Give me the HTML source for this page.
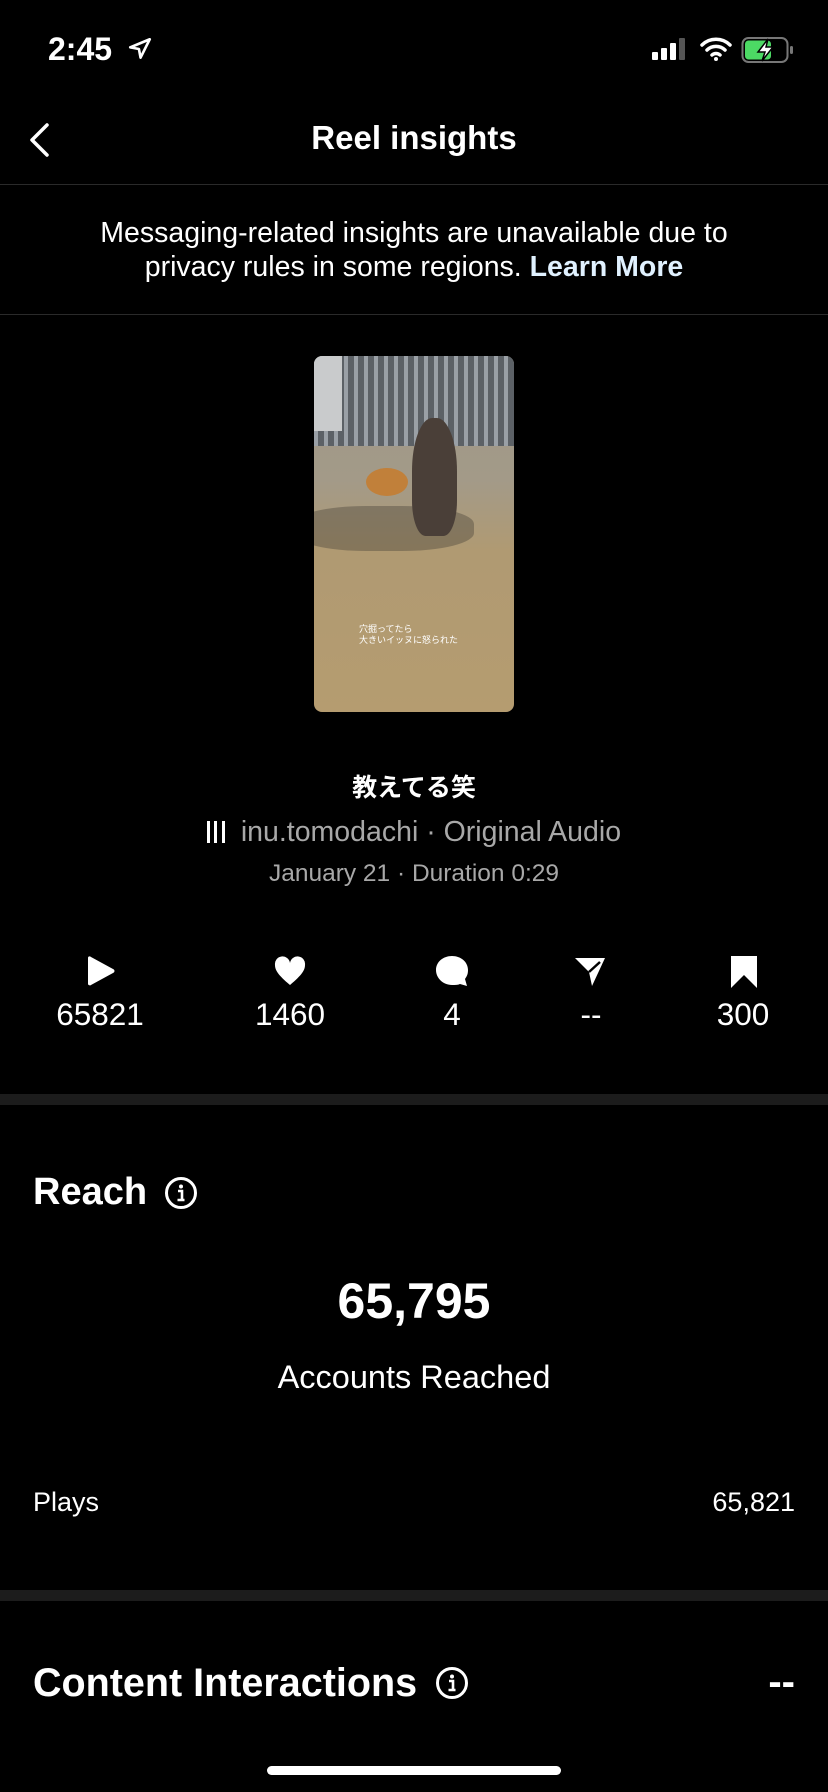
<!DOCTYPE html>
<html><head><meta charset="utf-8"><style>
*{margin:0;padding:0;box-sizing:border-box}
body{width:828px;height:1792px;background:#000;color:#fff;font-family:"Liberation Sans","Noto Sans CJK JP",sans-serif;position:relative;overflow:hidden}
.a{position:absolute;white-space:nowrap}
.c{left:0;width:828px;text-align:center}
.hr{position:absolute;left:0;width:828px;height:1px;background:#2a2a2a}
.sep{position:absolute;left:0;width:828px;height:11px;background:#1c1c1c}
.st{position:absolute;width:120px;text-align:center;font-size:31.5px}
</style></head><body>
<div class="a" style="left:48px;top:31px;font-size:32px;font-weight:600">2:45</div>
<svg class="a" style="left:127px;top:36px" width="26" height="26" viewBox="0 0 24 24"><path d="M21 3L3 10.5l8 1.5 1.5 8z" fill="none" stroke="#fff" stroke-width="2.4" stroke-linejoin="round"/></svg>
<svg class="a" style="left:652px;top:38px" width="40" height="22" viewBox="0 0 40 22"><rect x="0" y="14" width="6" height="8" rx="1" fill="#fff"/><rect x="9" y="10" width="6" height="12" rx="1" fill="#fff"/><rect x="18" y="5" width="6" height="17" rx="1" fill="#fff"/><rect x="27" y="0" width="6" height="22" rx="1" fill="#555"/></svg>
<svg class="a" style="left:700px;top:37px" width="32" height="24" viewBox="0 0 32 24"><path d="M2 8a20 20 0 0 1 28 0M7 13a13 13 0 0 1 18 0M12 18a6 6 0 0 1 8 0" fill="none" stroke="#fff" stroke-width="3.5" stroke-linecap="round"/><circle cx="16" cy="22" r="2" fill="#fff"/></svg>
<svg class="a" style="left:741px;top:36px" width="54" height="28" viewBox="0 0 54 28"><rect x="1.5" y="2" width="45" height="24" rx="6" fill="none" stroke="#777" stroke-width="2"/><rect x="4" y="4.5" width="26" height="19" rx="3.5" fill="#4cd964"/><rect x="49" y="10" width="3" height="8" rx="1.5" fill="#777"/><path d="M27 3l-10 13h7l-3 9 11-14h-7z" fill="#fff" stroke="#000" stroke-width="1.5"/></svg>
<svg class="a" style="left:26px;top:122px" width="26" height="36" viewBox="0 0 26 36"><path d="M21 3L6 18l15 15" fill="none" stroke="#fff" stroke-width="3.5" stroke-linecap="round" stroke-linejoin="round"/></svg>
<div class="a c" style="top:119px;font-size:33px;font-weight:700">Reel insights</div>
<div class="hr" style="top:184px"></div>
<div class="a c" style="top:216px;font-size:28.5px;line-height:34px">Messaging-related insights are unavailable due to<br>privacy rules in some regions. <span style="color:#e0f1ff;font-weight:700">Learn More</span></div>
<div class="hr" style="top:314px"></div>
<div class="a" style="left:314px;top:356px;width:200px;height:356px;border-radius:8px;overflow:hidden;background:linear-gradient(180deg,#9e9788 0%,#a39a88 35%,#b09a72 55%,#b59c70 100%)">
<div class="a" style="left:0;top:0;width:200px;height:90px;background:repeating-linear-gradient(90deg,#9aa0a6 0 4px,#5c6166 4px 10px)"></div>
<div class="a" style="left:0;top:0;width:28px;height:75px;background:#c9cbcc"></div>
<div class="a" style="left:-20px;top:150px;width:180px;height:45px;background:rgba(70,65,55,.4);border-radius:40%"></div>
<div class="a" style="left:52px;top:112px;width:42px;height:28px;background:#c1803a;border-radius:50%"></div>
<div class="a" style="left:98px;top:62px;width:45px;height:118px;background:#4a3f38;border-radius:45% 45% 30% 30%"></div>
<div class="a" style="left:45px;top:268px;font-size:9px;line-height:11px;color:#fff">穴掘ってたら<br>大きいイッヌに怒られた</div>
</div>
<div class="a c" style="top:768px;font-size:25px;font-weight:700">教えてる笑</div>
<div class="a c" style="top:816px;font-size:28.5px;color:#a8a8a8"><span style="display:inline-block;width:26px;height:22px;vertical-align:-2px;background:linear-gradient(90deg,#fff 0 3px,transparent 3px 7px,#fff 7px 10px,transparent 10px 15px,#fff 15px 18px,transparent 18px)"></span> inu.tomodachi · Original Audio</div>
<div class="a c" style="top:860px;font-size:24.5px;color:#a8a8a8">January 21 · Duration 0:29</div>
<svg class="a" style="left:85px;top:955px" width="32" height="32" viewBox="0 0 32 32"><path d="M3 3c0-2 2-2 3-1l22 12c2 1 2 3 0 4L6 30c-1 1-3 0-3-1z" fill="#fff"/></svg>
<svg class="a" style="left:274px;top:956px" width="32" height="30" viewBox="0 0 32 30"><path d="M16 29C4 19 1 14 1 9a7.5 7.5 0 0 1 15-2 7.5 7.5 0 0 1 15 2c0 5-3 10-15 20z" fill="#fff"/></svg>
<svg class="a" style="left:435px;top:955px" width="34" height="32" viewBox="0 0 34 32"><path d="M17 1C8 1 1 7 1 15c0 8 7 15 16 15 3 0 6 0 8-1l7 2-2-7c2-3 3-5 3-9C33 7 26 1 17 1z" fill="#fff"/></svg>
<svg class="a" style="left:574px;top:956px" width="32" height="32" viewBox="0 0 32 32"><path d="M1 2h30L18 30l-3-14L1 2z" fill="#fff"/><path d="M15 16L26 6" stroke="#000" stroke-width="2.5"/></svg>
<svg class="a" style="left:730px;top:955px" width="28" height="34" viewBox="0 0 28 34"><path d="M1 1h26v32L14 20 1 33z" fill="#fff"/></svg>
<div class="st" style="left:40px;top:996px">65821</div>
<div class="st" style="left:230px;top:996px">1460</div>
<div class="st" style="left:392px;top:996px">4</div>
<div class="st" style="left:531px;top:996px">--</div>
<div class="st" style="left:683px;top:996px">300</div>
<div class="sep" style="top:1094px"></div>
<div class="a" style="left:33px;top:1171px;font-size:38px;font-weight:700">Reach</div>
<svg class="a" style="left:164px;top:1176px" width="34" height="34" viewBox="0 0 34 34"><circle cx="17" cy="17" r="14.5" fill="none" stroke="#fff" stroke-width="3"/><circle cx="17" cy="10.5" r="2" fill="#fff"/><path d="M14 15h4v9M13.5 24h7" fill="none" stroke="#fff" stroke-width="2.6"/></svg>
<div class="a c" style="top:1272px;font-size:50px;font-weight:600">65,795</div>
<div class="a c" style="top:1359px;font-size:32.5px">Accounts Reached</div>
<div class="a" style="left:33px;top:1487px;font-size:27px">Plays</div>
<div class="a" style="right:33px;top:1487px;font-size:27px">65,821</div>
<div class="sep" style="top:1590px"></div>
<div class="a" style="left:33px;top:1661px;font-size:39.5px;font-weight:700">Content Interactions</div>
<svg class="a" style="left:435px;top:1666px" width="34" height="34" viewBox="0 0 34 34"><circle cx="17" cy="17" r="14.5" fill="none" stroke="#fff" stroke-width="3"/><circle cx="17" cy="10.5" r="2" fill="#fff"/><path d="M14 15h4v9M13.5 24h7" fill="none" stroke="#fff" stroke-width="2.6"/></svg>
<div class="a" style="right:33px;top:1660px;font-size:40px;font-weight:700">--</div>
<div class="a" style="left:267px;top:1766px;width:294px;height:9px;border-radius:5px;background:#fff"></div>
</body></html>
